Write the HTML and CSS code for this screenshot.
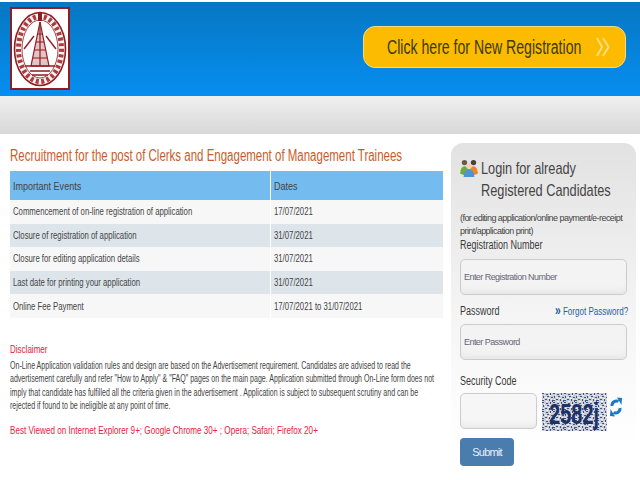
FILE: index.html
```html
<!DOCTYPE html>
<html lang="en">
<head>
    <meta charset="UTF-8">
    <meta name="viewport" content="width=device-width, initial-scale=1.0">
    <title>Recruitment - Clerks and Management Trainees</title>
    <link rel="stylesheet" href="styles.css">
</head>
<body>
    <header class="top-banner">
        <div class="logo-box">
            <svg width="54" height="76" viewBox="0 0 54 76">
                <ellipse cx="27" cy="38" rx="25.500" ry="36.500" fill="#fbf3f0" stroke="#8f1d22" stroke-width="1.600"/>
                <ellipse cx="27" cy="38" rx="21.500" ry="32.500" fill="none" stroke="#a83c40" stroke-width="5" stroke-dasharray="3 2.500"/>
                <ellipse cx="27" cy="38" rx="18" ry="29" fill="#fff" stroke="#a5474a" stroke-width="1"/>
                <path d="M27 11 L18 55 H36 Z" fill="#e3c3c3" stroke="#8f1d22" stroke-width="1.200"/>
                <path d="M27 11 V55 M24.500 23 H29.500 M23 31 H31 M21.500 39 H32.500 M20 47 H34" stroke="#8f1d22" stroke-width="1.200" fill="none"/>
                <path d="M12 55 H42 M17 60 H37 M19 64 H35" stroke="#8f1d22" stroke-width="1.500"/>
                <path d="M21 25 L11 38 M33 25 L43 38" stroke="#8f1d22" stroke-width="1.400"/>
                <rect x="25" y="2" width="4" height="8" fill="#8f1d22"/>
            </svg>
        </div>
        <a class="new-reg" href="#">
            <span>Click here for New Registration</span>
            <svg width="14" height="20" viewBox="0 0 14 20">
                <path d="M1 1 L6 10 L1 19 M7 1 L12.500 10 L7 19" fill="none" stroke="#fcdc7c" stroke-width="2"/>
            </svg>
        </a>
    </header>
    <div class="grey-band"></div>

    <div class="page-body">
        <main class="notice">
            <h1>Recruitment for the post of Clerks and Engagement of Management Trainees</h1>
            <table class="events">
                <tr><th><span>Important Events</span></th><th><span>Dates</span></th></tr>
                <tr><td><span>Commencement of on-line registration of application</span></td><td><span>17/07/2021</span></td></tr>
                <tr><td><span>Closure of registration of application</span></td><td><span>31/07/2021</span></td></tr>
                <tr><td><span>Closure for editing application details</span></td><td><span>31/07/2021</span></td></tr>
                <tr><td><span>Last date for printing your application</span></td><td><span>31/07/2021</span></td></tr>
                <tr><td><span>Online Fee Payment</span></td><td><span>17/07/2021 to 31/07/2021</span></td></tr>
            </table>
            <h2>Disclaimer</h2>
            <p class="disclaimer">On-Line Application validation rules and design are based on the Advertisement requirement. Candidates are advised to read the advertisement carefully and refer "How to Apply" &amp; "FAQ" pages on the main page. Application submitted through On-Line form does not imply that candidate has fulfilled all the criteria given in the advertisement . Application is subject to subsequent scrutiny and can be rejected if found to be ineligible at any point of time.</p>
            <p class="best-viewed">Best Viewed on Internet Explorer 9+; Google Chrome 30+ ; Opera; Safari; Firefox 20+</p>
        </main>

        <aside class="login-panel">
            <div class="login-title">
                <svg width="18" height="20" viewBox="0 0 20 22">
                    <circle cx="5" cy="5" r="3" fill="#6b5a4a"/>
                    <circle cx="15" cy="5" r="3" fill="#4a4038"/>
                    <path d="M0 17 Q1 9 5 9 Q8 9 9 12 L7 20 Z" fill="#6cab3c"/>
                    <path d="M11 12 Q12 9 15 9 Q19 9 20 17 L13 20 Z" fill="#e8872c"/>
                    <circle cx="10" cy="9" r="3" fill="#f3d3b0"/>
                    <path d="M4 21 Q5 12 10 12 Q15 12 16 21 Z" fill="#4d93d6"/>
                </svg>
                <h2>Login for already<br>Registered Candidates</h2>
            </div>
            <p class="login-note">(for editing application/online payment/e-receipt print/application print)</p>
            <label class="field-label">Registration Number</label>
            <input class="text-box" type="text" placeholder="Enter Registration Number">
            <div class="password-row">
                <label class="field-label">Password</label>
                <a class="forgot" href="#"><b>&raquo;</b> Forgot Password?</a>
            </div>
            <input class="text-box" type="password" placeholder="Enter Password">
            <label class="field-label security-label">Security Code</label>
            <div class="captcha-row">
                <input class="text-box code-box" type="text">
                <svg class="captcha" width="65" height="38" viewBox="0 0 65 38">
                    <defs>
                        <pattern id="noise" width="11" height="9" patternUnits="userSpaceOnUse">
                            <rect width="11" height="9" fill="#c9ced8"/>
                            <path d="M0 0h2v1h-2z M4 1h2v1h-2z M8 0h1v2h-1z M1 3h1v2h-1z M5 3h2v1h-2z M9 4h2v1h-2z M3 6h2v1h-2z M7 6h1v2h-1z M0 7h2v1h-2z M10 7h1v2h-1z" fill="#40557f"/>
                            <path d="M2 2h1v1h-1z M7 2h2v1h-2z M3 4h2v1h-2z M6 5h2v1h-2z M1 6h1v1h-1z M4 8h2v1h-2z M9 6h1v1h-1z" fill="#f2f3f6"/>
                        </pattern>
                    </defs>
                    <rect width="65" height="38" fill="url(#noise)"/>
                    <text class="captcha-text" transform="translate(7 31) scale(0.91 1.36)">2582j</text>
                </svg>
                <svg class="refresh" width="12" height="20" viewBox="0 0 12 20">
                    <path d="M2 9 A4.500 4.500 0 0 1 8.500 4.500" fill="none" stroke="#1b78c4" stroke-width="3"/>
                    <path d="M7 0.500 L12 1 L11.500 8 Z" fill="#1b78c4"/>
                    <path d="M10 11 A4.500 4.500 0 0 1 3.500 15.500" fill="none" stroke="#1b78c4" stroke-width="3"/>
                    <path d="M5 19.500 L0 19 L0.500 12 Z" fill="#1b78c4"/>
                </svg>
            </div>
            <button class="submit-btn" type="button">Submit</button>
        </aside>
    </div>
</body>
</html>
```

FILE: styles.css
```css
html, body {
    margin: 0;
    padding: 0;
}

body {
    width: 640px;
    height: 480px;
    overflow: hidden;
    background: #fff;
    color: #333;
    font-family: "Liberation Sans", Arial, sans-serif;
}

.top-banner {
    display: flex;
    justify-content: space-between;
    align-items: flex-start;
    box-sizing: border-box;
    height: 94px;
    margin-top: 2px;
    padding: 5px 14px 0 10px;
    background: linear-gradient(#0677c2, #068ef0);
}

.logo-box {
    display: flex;
    justify-content: center;
    align-items: center;
    box-sizing: border-box;
    width: 60px;
    height: 83px;
    background: #fff;
    border: 2px solid #8f1d22;
}

.new-reg {
    display: flex;
    justify-content: space-between;
    align-items: center;
    box-sizing: border-box;
    width: 263px;
    height: 42px;
    margin-top: 19px;
    padding: 0 15px 0 23px;
    background: #fdbb00;
    border: 1px solid #f3da84;
    border-radius: 12px;
    color: #3b3a0a;
    font-size: 20px;
    text-decoration: none;
    white-space: nowrap;
}

/* the source page is squashed sideways, so single lines get scaled */
.new-reg span {
    margin-right: -80px;
    transform: scaleX(0.705);
    transform-origin: left;
}

.new-reg svg {
    flex-shrink: 0;
}

.grey-band {
    height: 38px;
    background: linear-gradient(#f0f0f0, #d7d7d7);
}

.page-body {
    display: flex;
    align-items: flex-start;
    padding: 9px 4px 0 10px;
}

.notice {
    width: 434px;
    margin-right: 7px;
}

.notice h1 {
    margin: 4px 0 7px;
    color: #c95c2c;
    font-size: 16px;
    font-weight: normal;
    line-height: 17px;
    white-space: nowrap;
    transform: scaleX(0.718);
    transform-origin: left;
}

.events {
    width: 434px;
    border-collapse: collapse;
    font-size: 10px;
    color: #444;
}

.events th, .events td {
    padding: 0 3px;
    text-align: left;
    font-weight: normal;
}

.events span {
    display: inline-block;
    white-space: nowrap;
    transform: scaleX(0.775);
    transform-origin: left;
}

.events th {
    height: 29px;
    font-size: 11px;
    background: #74bbef;
    border-right: 1px solid #fff;
}

.events th span {
    transform: scaleX(0.82);
}

.events td {
    height: 23.600px;
    background: #f7f7f7;
    border-right: 1px solid #fff;
}

.events tr:nth-child(odd) td {
    background: #dde5eb;
}

.events th:first-child {
    width: 254px;
}

.notice h2 {
    margin: 25px 0 4px;
    color: #e8203c;
    font-size: 11px;
    font-weight: normal;
    transform: scaleX(0.73);
    transform-origin: left;
}

.disclaimer {
    width: 616px;
    margin: 0;
    font-size: 10px;
    line-height: 13.300px;
    color: #444;
    transform: scaleX(0.704);
    transform-origin: left;
}

.best-viewed {
    margin: 12px 0 0;
    color: #e8203c;
    font-size: 11px;
    white-space: nowrap;
    transform: scaleX(0.737);
    transform-origin: left;
}

.login-panel {
    box-sizing: border-box;
    width: 185px;
    height: 337px;
    padding: 15px 8px 0 9px;
    background: linear-gradient(#e2e2e2, #f6f6f6 55%, #fff 90%);
    border-radius: 12px 12px 0 0;
}

.login-title {
    display: flex;
    align-items: flex-start;
    gap: 3px;
    margin-bottom: 10px;
}

.login-title svg {
    flex-shrink: 0;
}

.login-title h2 {
    margin: 0 -50px 0 0;
    color: #444;
    font-size: 17px;
    font-weight: normal;
    line-height: 22px;
    white-space: nowrap;
    transform: scaleX(0.75);
    transform-origin: left;
}

.login-note {
    margin: 0;
    font-size: 9px;
    line-height: 13px;
    letter-spacing: -0.55px;
    color: #444;
}

.field-label {
    display: block;
    font-size: 12px;
    line-height: 14px;
    color: #3b3b3b;
    white-space: nowrap;
    transform: scaleX(0.75);
    transform-origin: left;
}

.text-box {
    display: block;
    box-sizing: border-box;
    width: 167px;
    height: 36px;
    margin: 7px 0 0;
    padding: 0 3px;
    background: #f3f3f3;
    border: 1px solid #ccc;
    border-radius: 5px;
    box-shadow: inset 0 -8px 10px -8px #ddd;
    font-family: inherit;
    font-size: 9px;
}

.text-box::placeholder {
    color: #667;
    letter-spacing: -0.55px;
}

.password-row {
    display: flex;
    justify-content: space-between;
    align-items: center;
    margin-top: 9px;
    margin-bottom: -1px;
}

.forgot {
    color: #2a5f9e;
    font-size: 11px;
    text-decoration: none;
    white-space: nowrap;
    transform: scaleX(0.73);
    transform-origin: right;
}

.forgot b {
    font-size: 14px;
    line-height: 11px;
}

.security-label {
    margin-top: 14px;
}

.captcha-row {
    display: flex;
    align-items: flex-start;
    margin-top: 5px;
}

.code-box {
    width: 77px;
    margin: 0 5px 0 0;
    background: #f6f6f6;
}

.captcha-text {
    fill: #1d3266;
    font-family: "Liberation Sans", Arial, sans-serif;
    font-size: 22px;
    font-weight: bold;
}

.refresh {
    margin: 4px 0 0 3px;
}

.submit-btn {
    display: block;
    width: 54px;
    height: 28px;
    margin-top: 7px;
    padding: 0;
    background: #4a7cae;
    border: none;
    border-radius: 4px;
    color: #e8f0f8;
    font-family: inherit;
    font-size: 11px;
    letter-spacing: -0.8px;
}
```
